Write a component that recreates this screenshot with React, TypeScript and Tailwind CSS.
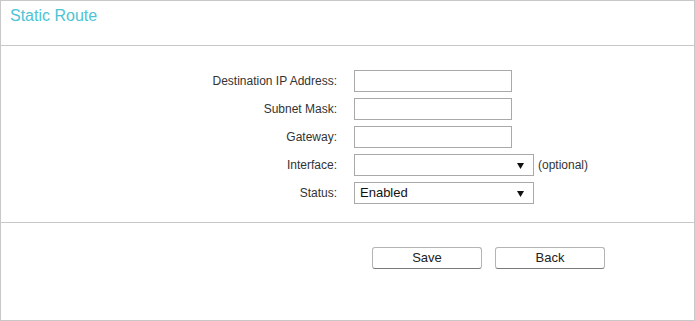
const labelClass =
  "w-[337px] shrink-0 pr-[1px] text-right text-[12px] text-[#333333]";

const TextRow: React.FC<{ label: string }> = ({ label }) => (
  <div className="flex h-[22px] items-center">
    <label className={labelClass}>{label}</label>
    <input
      type="text"
      className="ml-[16px] h-[22px] w-[158px] border border-[#a9a9a9] bg-white px-1 text-[13px] outline-none"
    />
  </div>
);

const Arrow = () => (
  <svg width="7" height="6" viewBox="0 0 7 6" className="absolute right-[9px] top-[8px]">
    <path d="M0 0 H7 L3.5 6 Z" fill="#111111" />
  </svg>
);

const SelectRow: React.FC<{ label: string; value: string; note?: string }> = ({
  label,
  value,
  note,
}) => (
  <div className="flex h-[22px] items-center">
    <label className={labelClass}>{label}</label>
    <div className="relative ml-[16px] h-[22px] w-[180px] border border-[#a9a9a9] bg-white">
      <span className="block pl-[5px] text-[13px] leading-[20px] text-[#111111]">{value}</span>
      <Arrow />
    </div>
    {note && <span className="ml-[4px] text-[12px] text-[#333333]">{note}</span>}
  </div>
);

const App: React.FC = () => {
  return (
    <div
      className="h-[321px] w-[695px] bg-white"
      style={{ fontFamily: '"Liberation Sans", Arial, sans-serif' }}
    >
      <div className="flex h-full w-full flex-col border border-[#c8c8c8]">
        <div className="h-[45px] border-b border-[#c8c8c8] pl-[9px] pt-[5px]">
          <h1 className="text-[16px] leading-[19px] text-[#4dc4d4]">Static Route</h1>
        </div>

        <div className="flex flex-col gap-[6px] border-b border-[#c8c8c8] pb-[18px] pt-[24px]">
          <TextRow label="Destination IP Address:" />
          <TextRow label="Subnet Mask:" />
          <TextRow label="Gateway:" />
          <SelectRow label="Interface:" value="" note="(optional)" />
          <SelectRow label="Status:" value="Enabled" />
        </div>

        <div className="flex gap-[13px] pl-[371px] pt-[24px]">
          <button className="h-[22px] w-[110px] rounded-[3px] border border-[#b4b4b4] border-b-[#7a7a7a] bg-white text-[13px] text-[#222222]">
            Save
          </button>
          <button className="h-[22px] w-[110px] rounded-[3px] border border-[#b4b4b4] border-b-[#7a7a7a] bg-white text-[13px] text-[#222222]">
            Back
          </button>
        </div>
      </div>
    </div>
  );
};

export default App;
